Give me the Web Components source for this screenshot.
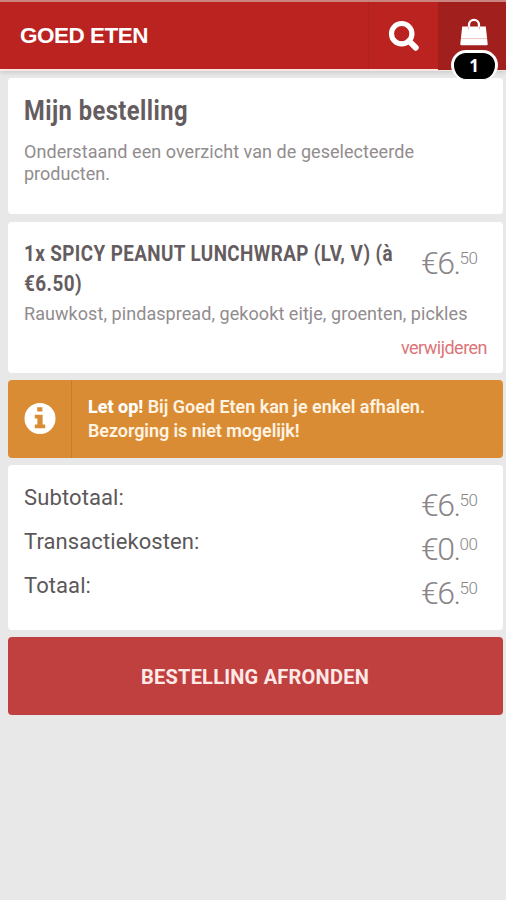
<!DOCTYPE html>
<html lang="nl">
<head>
<meta charset="utf-8">
<title>Goed Eten</title>
<style>
html,body{margin:0;height:100%}
body{background:#e8e8e8;font-family:Roboto,"Liberation Sans",sans-serif;overflow:hidden}
</style>
</head>
<body>
<order-page></order-page>
<script>
const define = (name, html, setup) => customElements.define(name, class extends HTMLElement {
  connectedCallback() {
    if (this.shadowRoot) return;
    this.attachShadow({mode: 'open'}).innerHTML = html;
    if (setup) setup(this);
  }
});

// One line of text set to a given width: by tracking, or by horizontal scale when condensed.
define('fit-line', `<style>
:host{display:block;white-space:nowrap;height:var(--lh);line-height:var(--lh)}
span{display:inline-block;transform-origin:0 50%}
</style><span><slot></slot></span>`, el => {
  const span = el.shadowRoot.querySelector('span');
  const target = +el.getAttribute('w');
  const n = el.textContent.length;
  if (el.hasAttribute('condensed')) {
    span.style.letterSpacing = '0.5px';
    span.style.transform = `scaleX(${target / span.getBoundingClientRect().width})`;
    el.style.width = target + 'px';
  } else {
    span.style.letterSpacing = (target - span.getBoundingClientRect().width) / n + 'px';
  }
});

customElements.define('money-amount', class extends HTMLElement {
  connectedCallback() {
    if (this.shadowRoot) return;
    const [a, b] = this.getAttribute('value').split('.');
    this.attachShadow({mode: 'open'}).innerHTML = `<style>
:host{display:flex;align-items:flex-start;flex:none;width:57px;height:36px;color:#8a8587}
.m{--lh:36px;font-size:32px;font-weight:300;width:38.5px;margin-left:-1px}
.c{--lh:20px;font-size:17px;font-weight:300;padding-top:2.5px}
</style><fit-line w="38.5" class="m">€${a}.</fit-line><fit-line w="18" class="c">${b}</fit-line>`;
  }
});

define('page-card', `<style>
:host{display:block;box-sizing:border-box;background:#fff;border-radius:4px}
</style><slot></slot>`);

define('site-header', `<style>
:host{display:flex;box-sizing:border-box;height:69px;background:#ba2320;border-top:2px solid #ca8580;
 box-shadow:0 1px 0 #fbe6e4,0 2px 0 #f4e6e5,0 4px 4px #0000001c}
.brand{flex:1;padding:21px 0 0 20px;font-family:"Liberation Sans",Arial,sans-serif;font-weight:700;font-size:22.5px;color:#fff;--lh:26px}
.search{width:69px;border-left:1px solid #ad211e;display:flex}
.search svg{margin:18px 0 0 19px}
.bag{width:68px;background:#a11f1c;position:relative;height:68px}
.bag svg{display:block;margin:15px 0 0 21px}
.count{position:absolute;left:12.5px;top:48px;box-sizing:border-box;width:47px;height:30px;border:3px solid #fff;border-bottom-width:1px;border-radius:16px;background:#000;color:#fff;
 font:700 17px/26px "Open Sans","Liberation Sans",sans-serif;text-align:center}
</style>
<div class="brand"><fit-line w="128">GOED ETEN</fit-line></div>
<div class="search"><svg width="32" height="32" viewBox="0 0 32 32"><circle cx="13.7" cy="13.7" r="10.2" fill="none" stroke="#fff" stroke-width="5.2"/><path d="M21 21l6.7 6.7" stroke="#fff" stroke-width="6" stroke-linecap="round"/></svg></div>
<div class="bag"><svg width="30" height="30" viewBox="0 0 30 30"><path d="M10 11V8a5 5.2 0 0 1 10 0V11" fill="none" stroke="#fff" stroke-width="2.2"/><path d="M3.2 9.5h23.6L28.7 27q.1 1.2-1 1.2H2.3q-1.1 0-1-1.2z" fill="#fff"/><path d="M2 21.6h26" stroke="#eec4c0" stroke-width="1"/><path d="M9.7 9.5v3M20.3 9.5v3" stroke="#e5b3ae" stroke-width="1"/></svg><div class="count">1</div></div>`);

define('notice-bar', `<style>
:host{display:flex;height:78px;background:#da8c34;border-radius:4px;color:#fff3e2;overflow:hidden}
.icon{width:63px;border-right:1px solid #c67d2b;display:flex;align-items:center}
.icon svg{margin-left:16px}
.text{padding:15px 0 0 16px;font-size:18px;font-weight:600;--lh:24px}
</style><div class="icon"><svg width="32" height="32" viewBox="0 0 32 32"><circle cx="16" cy="15.5" r="15.5" fill="#fff"/><path d="M13.2 4.2h5.2v4.4h-5.2zM10.8 11.7h7.8v9.9h2.6v3.7H10.8v-3.7h2.6v-6.2h-2.6z" fill="#da8c34"/></svg></div><div class="text"><slot></slot></div>`);

define('total-row', `<style>
:host{display:flex;justify-content:space-between;height:44px;font-size:22px;color:#5c585a;--lh:44px}
</style><slot></slot>`);

define('action-button', `<style>
:host{display:block;height:78px;border-radius:4px;background:#c04040}
button{all:unset;box-sizing:border-box;padding:2px 1px 0 0;display:flex;width:100%;height:100%;justify-content:center;align-items:center;color:#ffe9e7;font-size:20px;font-weight:700;--lh:26px}
</style><button><slot></slot></button>`);

define('order-page', `<style>
:host{display:block;height:900px}
main{display:flex;flex-direction:column;padding:9px 3px 0 8px;gap:7px}
.intro{height:136px;padding:17px 16px 0;margin-bottom:1px}
.h{--lh:32px;font-size:27px;font-weight:700;color:#655c60}
.p{--lh:22px;font-size:18px;color:#918c8e}
.intro .h{margin-bottom:14px}
.item{height:151px;padding:16px}
.top{display:flex;justify-content:space-between}
.t{--lh:30px;font-size:22.5px;font-weight:700;color:#655c60}
.top money-amount{margin:7px 8px 0 0}
.item .p{margin-top:5px}
.del{display:flex;justify-content:flex-end;margin:12px 0 0;--lh:22px;font-size:18px;color:#dc7478}
.totals{height:165px;padding:11px 24px 0 16px}
.totals money-amount{margin-top:11px}
b{font-weight:800;color:#fff}
</style>
<site-header></site-header>
<main>
<page-card class="intro"><fit-line class="h" condensed w="164">Mijn bestelling</fit-line>
<fit-line class="p" w="390">Onderstaand een overzicht van de geselecteerde</fit-line><fit-line class="p" w="86">producten.</fit-line></page-card>
<page-card class="item"><div class="top"><div><fit-line class="t" condensed w="369">1x SPICY PEANUT LUNCHWRAP (LV, V) (à</fit-line><fit-line class="t" condensed w="58">€6.50)</fit-line></div><money-amount value="6.50"></money-amount></div>
<fit-line class="p" w="443.5">Rauwkost, pindaspread, gekookt eitje, groenten, pickles</fit-line>
<div class="del"><fit-line w="86">verwijderen</fit-line></div></page-card>
<notice-bar><fit-line w="337"><b>Let op!</b> Bij Goed Eten kan je enkel afhalen.</fit-line><fit-line w="211.5">Bezorging is niet mogelijk!</fit-line></notice-bar>
<page-card class="totals">
<total-row><fit-line w="100">Subtotaal:</fit-line><money-amount value="6.50"></money-amount></total-row>
<total-row><fit-line w="175.5">Transactiekosten:</fit-line><money-amount value="0.00"></money-amount></total-row>
<total-row><fit-line w="67">Totaal:</fit-line><money-amount value="6.50"></money-amount></total-row>
</page-card>
<action-button><fit-line w="228">BESTELLING AFRONDEN</fit-line></action-button>
</main>`);
</script>
</body>
</html>
